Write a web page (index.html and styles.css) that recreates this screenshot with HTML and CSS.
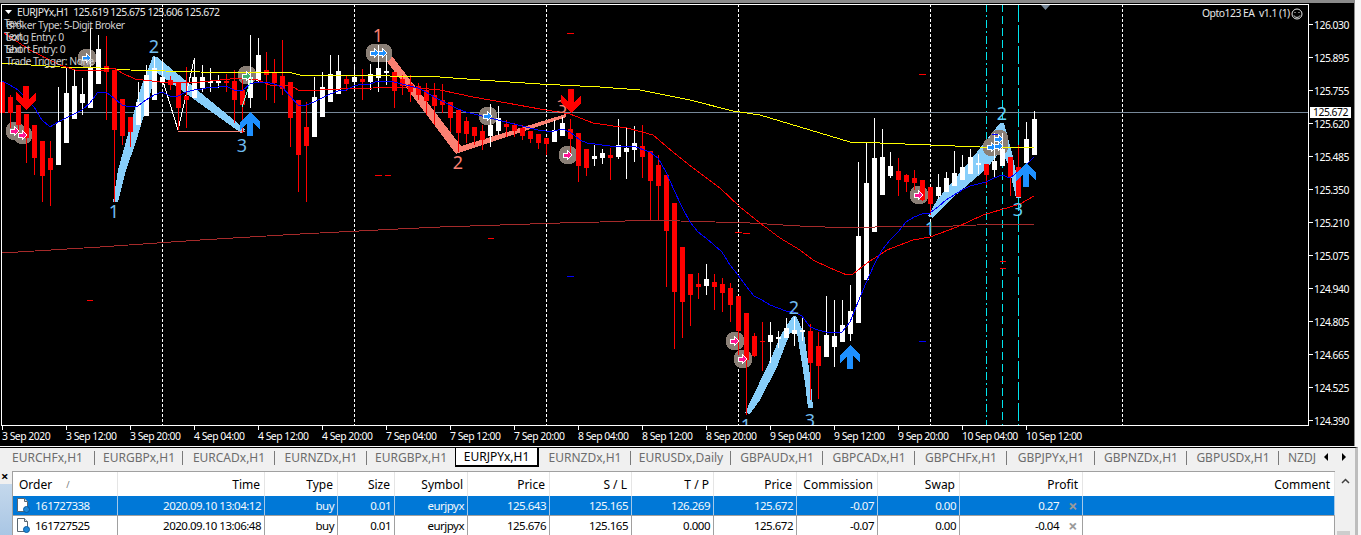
FILE: index.html
```html
<!DOCTYPE html>
<html lang="en">
<head>
<meta charset="utf-8">
<title>EURJPYx,H1</title>
<link rel="stylesheet" href="styles.css">
</head>
<body>
<main class="terminal">
  <section class="chart">
    <svg class="plot" viewBox="0 3 1309 423" width="1309" height="423">
      <defs>
        <polygon id="arrow-up" points="0,0 10,10 10,18 3,11 3,24 -3,24 -3,11 -10,18 -10,10"/>
        <polygon id="arrow-down" points="0,24 10,14 10,6 3,13 3,0 -3,0 -3,13 -10,6 -10,14"/>
        <polygon id="mini-arrow" points="-5,-2 -1,-2 -1,-5 4,0 -1,5 -1,2 -5,2"/>
      </defs>
      <g class="grid">
        <line x1="162.5" y1="4" x2="162.5" y2="425"/>
        <line x1="354.5" y1="4" x2="354.5" y2="425"/>
        <line x1="546.5" y1="4" x2="546.5" y2="425"/>
        <line x1="738.5" y1="4" x2="738.5" y2="425"/>
        <line x1="930.5" y1="4" x2="930.5" y2="425"/>
        <line x1="1122.5" y1="4" x2="1122.5" y2="425"/>
      </g>
      <line class="cyan dash-a" x1="986.5" y1="4" x2="986.5" y2="425"/>
      <line class="cyan dash-b" x1="1002.5" y1="4" x2="1002.5" y2="425"/>
      <line class="cyan dash-c" x1="1018.5" y1="4" x2="1018.5" y2="425"/>
      <line class="price-line" x1="2" y1="112.5" x2="1308" y2="112.5"/>

      <g class="zig-blue">
        <polygon points="113,202 118,170 125,145 140,90 153,56 157,57 245,129 241,133 156,72 150,95 135,145 126,170 118,202"/>
        <polygon points="745,413 751,400 767,367 782,333 793,316 796,316 804,333 811,383 813,408 808,408 805,383 797,333 790,333 777,367 760,400 750,414"/>
        <polygon points="928,216 937,200 973,157 1000,123 1004,123 1013,157 1021,198 1016,198 1009,167 1002,150 985,170 950,200 933,218"/>
      </g>
      <polygon class="zig-salmon" points="378,44 385,47 461,146 566,114 566,117 456,154 376,47"/>
      <polyline class="thin-white" points="162,78 178,130 194,60"/>
      <line class="thin-salmon" x1="178" y1="131.5" x2="245" y2="131.5"/>

      <g class="halo">
        <circle cx="87" cy="58" r="9.5"/><circle cx="15" cy="131" r="9.5"/><circle cx="23" cy="135" r="9.5"/>
        <circle cx="247" cy="75" r="9.5"/><circle cx="375" cy="53" r="9.5"/><circle cx="383" cy="53" r="9.5"/>
        <circle cx="488" cy="116" r="9.5"/><circle cx="568" cy="155" r="9.5"/><circle cx="735" cy="341" r="9.5"/>
        <circle cx="743" cy="359" r="9.5"/><circle cx="919" cy="195" r="9.5"/><circle cx="992" cy="147" r="9.5"/>
        <circle cx="999" cy="139" r="9.5"/><circle cx="999" cy="146" r="9.5"/>
      </g>

      <g id="candles"></g>

      <polyline class="ma ma-brown" points="2,253 100,247 200,240 300,234 398,229 440,227 500,225 560,223 600,222 650,220 680,221 750,223 800,226 850,228 900,226 930,227 1000,224 1034,224"/>
      <polyline class="ma ma-yellow" points="2,63 60,67 100,68 130,70 200,72 292,73 300,75 340,75 440,77 480,80 540,84 600,87 640,90 680,98 690,100 733,111 760,115 800,127 850,142 880,143 930,145 980,147 1034,147"/>
      <polyline class="ma ma-red" points="4,33 30,50 60,65 75,70 100,71 114,68 122,73 135,79 160,82 200,82 240,78 258,80 270,85 290,85 298,90 320,90 340,89 373,88 407,87 440,90 473,97 507,103 540,109 570,114 593,123 627,128 653,135 673,152 693,168 720,188 740,207 760,223 780,238 800,250 813,260 830,268 847,275 853,274 867,263 887,250 913,240 930,237 957,227 983,215 1010,207 1020,204 1034,196"/>
      <polyline class="ma ma-blue" points="2,81 10,85 18,90 26,98 34,107 42,120 50,127 58,122 66,118 74,114 82,110 90,103 98,92 106,92 114,98 122,105 130,107 138,106 146,100 154,95 162,92 170,96 178,96 186,92 194,90 202,89 210,87 218,87 226,86 234,90 242,91 250,84 258,82 266,82 274,84 282,87 290,96 298,105 306,105 314,102 322,98 330,94 338,91 346,90 354,86 362,84 370,84 378,81 386,81 394,82 402,84 410,86 418,88 426,92 434,97 442,101 450,105 458,109 466,112 474,114 482,116 490,118 498,120 506,122 514,124 522,126 530,128 538,130 546,131 554,131 562,129 570,132 580,140 587,143 610,146 633,146 650,152 658,158 666,172 674,190 682,207 690,222 698,232 706,238 714,245 722,252 730,265 738,275 746,286 754,296 762,300 770,305 778,308 786,311 794,312 802,316 810,327 818,330 826,332 834,333 842,332 850,322 858,302 866,283 874,265 882,250 890,240 898,232 906,222 914,217 922,214 930,213 938,207 946,200 954,195 962,190 970,186 978,184 986,182 994,178 1002,175 1010,178 1018,172 1026,165 1034,157"/>
      <polyline class="ma ma-aqua" points="242,107 246,95 252,77"/>

      <g class="stray-red">
        <rect x="87" y="300" width="6" height="1"/><rect x="375" y="175" width="7" height="1"/><rect x="385" y="175" width="6" height="1"/>
        <rect x="567" y="33" width="7" height="1"/><rect x="735" y="232" width="7" height="1"/><rect x="743" y="233" width="7" height="1"/>
        <rect x="1000" y="261" width="6" height="1"/><rect x="1000" y="268" width="6" height="1"/><rect x="919" y="74" width="7" height="1"/>
        <rect x="488" y="238" width="6" height="1"/>
      </g>
      <g class="stray-blue">
        <rect x="567" y="276" width="7" height="1"/><rect x="919" y="341" width="7" height="1"/><rect x="992" y="134" width="6" height="1"/>
      </g>

      <g class="mini mini-blue">
        <use href="#mini-arrow" x="87" y="58"/><use href="#mini-arrow" x="375" y="53"/><use href="#mini-arrow" x="383" y="53"/>
        <use href="#mini-arrow" x="488" y="116"/><use href="#mini-arrow" x="992" y="147"/><use href="#mini-arrow" x="999" y="139"/>
        <use href="#mini-arrow" x="999" y="146"/>
      </g>
      <g class="mini mini-pink">
        <use href="#mini-arrow" x="15" y="131"/><use href="#mini-arrow" x="23" y="135"/><use href="#mini-arrow" x="568" y="155"/>
        <use href="#mini-arrow" x="735" y="341"/><use href="#mini-arrow" x="743" y="359"/><use href="#mini-arrow" x="919" y="195"/>
      </g>
      <use class="mini mini-green" href="#mini-arrow" x="247" y="76"/>

      <g class="pivot pivot-blue">
        <text x="114" y="218">1</text><text x="154" y="53">2</text><text x="242" y="152">3</text>
        <text x="746" y="432">1</text><text x="794" y="314">2</text><text x="810" y="427">3</text>
      </g>
      <g class="pivot pivot-salmon">
        <text x="378" y="42">1</text><text x="458" y="169">2</text><text x="562" y="113">3</text>
      </g>
      <g class="pivot pivot-sky">
        <text x="930" y="235">1</text><text x="1002" y="120">2</text><text x="1018" y="216">3</text>
      </g>

      <g class="big-red">
        <use href="#arrow-down" x="26" y="86"/><use href="#arrow-down" x="571" y="89"/>
      </g>
      <g class="big-blue">
        <use href="#arrow-up" x="250" y="112"/><use href="#arrow-up" x="850" y="345"/><use href="#arrow-up" x="1026" y="163"/>
      </g>

      <polygon class="shift-mark" points="1041,5 1050,5 1045.5,10"/>
      <rect class="frame" x="1.5" y="4.5" width="1307" height="421"/>

      <polygon class="caret" points="5,10 12,10 8.5,14"/>
      <text class="chart-text bright" x="17" y="16">EURJPYx,H1  125.619 125.675 125.606 125.672</text>
      <text class="chart-text" x="6" y="29">Broker Type: 5-Digit Broker</text>
      <text class="chart-text" x="6" y="41">Long Entry: 0</text>
      <text class="chart-text" x="6" y="53">Short Entry: 0</text>
      <text class="chart-text" x="6" y="65">Trade Trigger: None</text>
      <text class="chart-text" x="4" y="27">Text</text>
      <text class="chart-text" x="4" y="40">Text</text>
      <text class="chart-text" x="4" y="53">Text</text>
      <text class="chart-text bright" x="1202" y="17">Opto123 EA  v1.1 (1)</text>
      <g class="smiley">
        <circle cx="1297" cy="14" r="5"/>
        <path d="M1294.5 12.5h1M1298.5 12.5h1M1294 15.5c1 2.5 5 2.5 6 0"/>
      </g>
    </svg>

    <div class="price-axis">
      <span class="price-tick">126.030</span>
      <span class="price-tick">125.895</span>
      <span class="price-tick">125.755</span>
      <span class="price-tick">125.620</span>
      <span class="price-tick">125.485</span>
      <span class="price-tick">125.350</span>
      <span class="price-tick">125.210</span>
      <span class="price-tick">125.075</span>
      <span class="price-tick">124.940</span>
      <span class="price-tick">124.805</span>
      <span class="price-tick">124.665</span>
      <span class="price-tick">124.525</span>
      <span class="price-tick">124.390</span>
      <span class="price-now">125.672</span>
    </div>

    <div class="time-axis">
      <span class="time-tick">3 Sep 2020</span>
      <span class="time-tick">3 Sep 12:00</span>
      <span class="time-tick">3 Sep 20:00</span>
      <span class="time-tick">4 Sep 04:00</span>
      <span class="time-tick">4 Sep 12:00</span>
      <span class="time-tick">4 Sep 20:00</span>
      <span class="time-tick">7 Sep 04:00</span>
      <span class="time-tick">7 Sep 12:00</span>
      <span class="time-tick">7 Sep 20:00</span>
      <span class="time-tick">8 Sep 04:00</span>
      <span class="time-tick">8 Sep 12:00</span>
      <span class="time-tick">8 Sep 20:00</span>
      <span class="time-tick">9 Sep 04:00</span>
      <span class="time-tick">9 Sep 12:00</span>
      <span class="time-tick">9 Sep 20:00</span>
      <span class="time-tick">10 Sep 04:00</span>
      <span class="time-tick">10 Sep 12:00</span>
    </div>
  </section>

  <nav class="tabs">
    <span class="tab">EURCHFx,H1</span>
    <span class="tab">EURGBPx,H1</span>
    <span class="tab">EURCADx,H1</span>
    <span class="tab">EURNZDx,H1</span>
    <span class="tab tab-before">EURGBPx,H1</span>
    <span class="tab tab-active">EURJPYx,H1</span>
    <span class="tab">EURNZDx,H1</span>
    <span class="tab">EURUSDx,Daily</span>
    <span class="tab">GBPAUDx,H1</span>
    <span class="tab">GBPCADx,H1</span>
    <span class="tab">GBPCHFx,H1</span>
    <span class="tab">GBPJPYx,H1</span>
    <span class="tab">GBPNZDx,H1</span>
    <span class="tab">GBPUSDx,H1</span>
    <span class="tab tab-clip">NZDJ</span>
    <span class="tab-arrows"><i class="tri-left"></i><i class="tri-right"></i></span>
  </nav>

  <section class="toolbox">
    <aside class="dock">
      <span class="dock-close">×</span>
      <span class="dock-pane"></span>
    </aside>
    <div class="orders">
      <div class="row head">
        <span class="cell left">Order<em class="sort">/</em></span>
        <span class="cell">Time</span><span class="cell">Type</span><span class="cell">Size</span>
        <span class="cell">Symbol</span><span class="cell">Price</span><span class="cell">S / L</span>
        <span class="cell">T / P</span><span class="cell">Price</span><span class="cell">Commission</span>
        <span class="cell">Swap</span><span class="cell">Profit</span><span class="cell">Comment</span>
      </div>
      <div class="row order selected">
        <span class="cell left">
          <svg class="doc" viewBox="0 0 14 15" width="14" height="15"><path class="doc-page" d="M1.5.5h7l3 3v10h-10z"/><path class="doc-fold" d="M8.5.5v3h3"/><circle class="doc-dot" cx="10.5" cy="11.5" r="3"/></svg>161727338
        </span>
        <span class="cell">2020.09.10 13:04:12</span><span class="cell">buy</span><span class="cell">0.01</span>
        <span class="cell">eurjpyx</span><span class="cell">125.643</span><span class="cell">125.165</span>
        <span class="cell">126.269</span><span class="cell">125.672</span><span class="cell">-0.07</span>
        <span class="cell">0.00</span><span class="cell profit">0.27<b class="close-x">×</b></span><span class="cell"></span>
      </div>
      <div class="row order">
        <span class="cell left">
          <svg class="doc" viewBox="0 0 14 15" width="14" height="15"><path class="doc-page" d="M1.5.5h7l3 3v10h-10z"/><path class="doc-fold" d="M8.5.5v3h3"/><circle class="doc-dot" cx="10.5" cy="11.5" r="3"/></svg>161727525
        </span>
        <span class="cell">2020.09.10 13:06:48</span><span class="cell">buy</span><span class="cell">0.01</span>
        <span class="cell">eurjpyx</span><span class="cell">125.676</span><span class="cell">125.165</span>
        <span class="cell">0.000</span><span class="cell">125.672</span><span class="cell">-0.07</span>
        <span class="cell">0.00</span><span class="cell profit">-0.04<b class="close-x">×</b></span><span class="cell"></span>
      </div>
    </div>
    <div class="scrollbar">
      <svg class="scroll-up" viewBox="0 0 9 6" width="9" height="6"><path d="M1 5l3.5-3.5L8 5"/></svg>
      <span class="scroll-thumb"></span>
    </div>
  </section>
</main>
<script src="script.js"></script>
</body>
</html>
```

FILE: styles.css
```css
* { box-sizing: border-box; }
html, body { margin: 0; height: 100%; overflow: hidden; }
body {
  background: #f7f7f7;
  font-family: "Noto Sans", "Open Sans", sans-serif;
  color: #000;
}
.terminal { display: flex; flex-direction: column; width: 1361px; height: 535px; overflow: hidden; }

/* chart */
.chart {
  display: grid;
  grid-template-columns: 1309px 45px;
  grid-template-rows: 423px 20px;
  width: 1355px;
  height: 446px;
  background: #000;
  color: #fff;
  border-top: 3px solid #8a8a8a;
  border-right: 1px solid #8a8a8a;
  font-size: 10.4px;
  line-height: 12px;
  letter-spacing: -0.5px;
}
.plot { display: block; background: #000; }
.grid line { stroke: #fff; stroke-width: 1; stroke-dasharray: 3 2; shape-rendering: crispEdges; }
.cyan { stroke: #00e5ee; stroke-width: 1; shape-rendering: crispEdges; }
.dash-a { stroke-dasharray: 8 3 2 3; }
.dash-b { stroke-dasharray: 8 4; }
.dash-c { stroke-dasharray: 18 3; }
.price-line { stroke: #778899; stroke-width: 1; shape-rendering: crispEdges; }
.zig-blue polygon { fill: #87cefa; shape-rendering: crispEdges; }
.zig-salmon { fill: #fa8072; shape-rendering: crispEdges; }
.thin-white { fill: none; stroke: #fff; stroke-width: 1; shape-rendering: crispEdges; }
.thin-salmon { stroke: #fa8072; stroke-width: 1; shape-rendering: crispEdges; }
.halo circle { fill: #8a7f76; shape-rendering: crispEdges; }
.ma { fill: none; stroke-width: 1; shape-rendering: crispEdges; }
.ma-brown { stroke: #a52a2a; }
.ma-yellow { stroke: #ffff00; }
.ma-red { stroke: #ff0000; }
.ma-blue { stroke: #0000ff; }
.ma-aqua { stroke: #7fffd4; }
.stray-red rect { fill: #ff0000; }
.stray-blue rect { fill: #0000ff; }
.wick-r, .body-r { fill: #ff0000; }
.wick-w, .body-w { fill: #ffffff; }
.mini { stroke: #fff; stroke-width: 1; shape-rendering: crispEdges; }
.mini-blue { fill: #1e90ff; }
.mini-pink { fill: #ff1493; }
.mini-green { fill: #3cb371; }
.pivot { font-family: "Noto Sans", sans-serif; font-size: 18px; letter-spacing: 0; text-anchor: middle; }
.pivot-blue text { fill: #70bcf0; }
.pivot-salmon text { fill: #fa8072; }
.pivot-sky text { fill: #62d0f8; }
.big-red { fill: #ff0000; shape-rendering: crispEdges; }
.big-blue { fill: #1e90ff; shape-rendering: crispEdges; }
.shift-mark { fill: #778899; }
.frame { fill: none; stroke: #fff; stroke-width: 1; shape-rendering: crispEdges; }
.caret { fill: #fff; }
.chart-text { font-size: 10.4px; fill: #cfcfcf; white-space: pre; }
.bright { fill: #e8e8e8; }
.smiley { fill: none; stroke: #e8e8e8; stroke-width: 1; }

.price-axis {
  position: relative;
  display: flex;
  flex-direction: column;
  padding-top: 5px;
}
.price-tick {
  display: flex;
  align-items: center;
  flex: 0 0 33px;
  gap: 1px;
}
.price-tick::before { content: ""; width: 4px; height: 1px; background: #fff; }
.price-now {
  position: absolute;
  left: 1px;
  top: 104px;
  width: 41px;
  height: 11px;
  padding-left: 3px;
  background: #fff;
  color: #000;
  line-height: 11px;
}
.time-axis {
  grid-column: 1 / -1;
  display: grid;
  grid-auto-flow: column;
  grid-auto-columns: 64px;
  padding-left: 2px;
  white-space: nowrap;
}
.time-tick::before { content: ""; display: block; width: 1px; height: 4px; background: #fff; }
.time-tick { line-height: 13px; }

/* tabs */
.tabs {
  display: grid;
  grid-template-columns: 95px 88px 92px 92px 88px 84px 92px 100px 92px 92px 92px 88px 92px 92px 39px 1fr;
  align-items: stretch;
  width: 1358px;
  height: 21px;
  margin-top: 1px;
  border-top: 1px solid #000;
  border-right: 3px solid #bdbdbd;
  font-size: 12px;
  color: #6d6d6d;
  background: #f0f0f0;
}
.tab {
  display: flex;
  align-items: center;
  justify-content: center;
  height: 18px;
  white-space: nowrap;
  position: relative;
}
.tab::after {
  content: "";
  position: absolute;
  right: 0;
  top: 3px;
  bottom: 1px;
  width: 1px;
  background: #7a7a7a;
}
.tab-before::after { display: none; }
.tab-active {
  margin-top: -1px;
  height: 20px;
  border: 1px solid #000;
  border-right-width: 2px;
  border-bottom-width: 2px;
  background: #fff;
  color: #000;
}
.tab-active::after, .tab-clip::after { display: none; }
.tab-clip { overflow: hidden; justify-content: flex-end; padding-right: 2px; }
.tab-arrows { display: flex; align-items: center; gap: 14px; height: 18px; padding-left: 6px; }
.tri-left { width: 0; height: 0; border: 4px solid transparent; border-left-width: 0; border-right: 4px solid #000; }
.tri-right { width: 0; height: 0; border: 4px solid transparent; border-right-width: 0; border-left: 4px solid #000; }

/* toolbox */
.toolbox {
  display: grid;
  grid-template-columns: 13px 1322px 20px;
  width: 1358px;
  height: 68px;
  padding-top: 4px;
  background: #f0f0f0;
  border-right: 3px solid #bdbdbd;
}
.dock { display: flex; flex-direction: column; border-top: 0; }
.dock-close { height: 13px; font-size: 13px; line-height: 10px; font-weight: 700; padding-left: 1px; }
.dock-pane { flex: 1; margin-right: 1px; background: linear-gradient(#c4d8ec, #a9c6e4); }
.orders { background: #fff; font-size: 12px; border-top: 1px solid #a0a0a0; border-left: 1px solid #a0a0a0; margin-left: -1px; }
.row {
  display: grid;
  grid-template-columns: 105px 147px 73px 57px 73px 82px 82px 82px 83px 81px 82px 123px 252px;
  white-space: nowrap;
}
.cell { display: flex; align-items: center; justify-content: flex-end; padding-right: 3px; border-right: 1px solid #a0a0a0; }
.left { justify-content: flex-start; }
.head { height: 24px; }
.head .cell { padding-right: 4px; border-right-color: #e5e5e5; }
.head .left { padding-left: 6px; }
.sort { margin-left: 14px; font-style: normal; font-size: 9px; color: #777; }
.order { height: 20px; border-bottom: 1px solid #a0a0a0; font-size: 11.5px; letter-spacing: -0.5px; }
.order .left { padding-left: 3px; }
.selected { background: #0078d7; color: #f4f8fc; }
.selected .cell { border-right-color: #a5c8e8; }
.doc { margin-right: 5px; flex: none; }
.doc-page { fill: #fff; stroke: #5a6670; stroke-width: 1; }
.doc-fold { fill: #e4e8ec; stroke: #5a6670; stroke-width: 1; }
.doc-dot { fill: #1e88d8; stroke: #0b5a9c; stroke-width: 1; }
.profit { padding-right: 0; }
.close-x { display: inline-block; width: 23px; padding-right: 5px; text-align: right; font-size: 16px; line-height: 12px; color: #9a9a9a; font-weight: 700; }
.scrollbar { display: flex; flex-direction: column; align-items: center; position: relative; background: #f0f0f0; }
.scroll-up { margin-top: 7px; fill: none; stroke: #404040; stroke-width: 1.5; }
.scroll-thumb { position: absolute; left: 2px; right: 5px; top: 60px; bottom: 0; background: #cdcdcd; }
```

FILE: script.js
```js
// Each candle: high, body top, body bottom, low, colour. Candles sit 8px apart, starting at x = 2.
var candles = [
  [82,82,113,113,'r'],[95,97,113,128,'r'],[105,105,125,134,'r'],[114,114,138,163,'r'],[125,125,158,175,'r'],
  [141,141,176,202,'r'],[141,158,170,206,'r'],[87,122,165,165,'w'],[68,93,143,143,'w'],[70,86,119,119,'w'],
  [78,94,103,115,'w'],[28,68,108,108,'w'],[35,49,84,84,'w'],[36,66,72,120,'r'],[70,70,130,202,'r'],
  [99,99,136,145,'r'],[117,117,132,147,'r'],[82,102,125,125,'w'],[65,75,116,116,'w'],[57,68,100,100,'w'],
  [60,77,83,87,'w'],[76,80,85,90,'r'],[82,82,108,130,'r'],[67,96,100,128,'r'],[58,77,98,98,'w'],
  [65,77,88,92,'w'],[68,81,83,92,'w'],[75,81,83,88,'w'],[74,81,83,92,'r'],[70,81,100,123,'r'],
  [80,90,105,133,'r'],[35,77,98,108,'w'],[38,55,81,83,'w'],[52,70,75,100,'r'],[59,72,83,103,'r'],
  [40,76,89,95,'r'],[82,82,118,147,'r'],[100,100,155,192,'r'],[102,127,146,202,'r'],[77,97,137,137,'w'],
  [72,87,117,117,'w'],[55,74,102,102,'w'],[55,71,94,94,'w'],[75,79,84,91,'r'],[64,77,82,88,'w'],
  [69,79,82,100,'r'],[64,74,82,90,'w'],[45,68,78,92,'w'],[55,71,73,85,'w'],[72,72,91,108,'r'],
  [75,79,86,95,'r'],[75,84,92,102,'r'],[83,86,95,100,'r'],[83,90,101,115,'r'],[83,95,106,125,'r'],
  [84,100,105,113,'r'],[102,102,118,132,'r'],[110,110,133,152,'r'],[117,121,134,143,'r'],[127,127,136,145,'r'],
  [125,131,140,150,'r'],[104,125,136,147,'w'],[106,118,131,135,'w'],[120,124,127,137,'r'],[123,125,131,137,'r'],
  [125,128,136,140,'r'],[131,131,139,143,'r'],[134,134,143,149,'r'],[138,138,144,155,'r'],[120,130,142,142,'w'],
  [117,123,136,136,'w'],[119,129,139,155,'r'],[133,133,166,182,'r'],[149,149,168,176,'r'],[145,156,159,166,'w'],
  [149,153,158,164,'w'],[148,155,158,180,'r'],[119,145,157,159,'w'],[128,148,152,179,'w'],[126,143,150,162,'w'],
  [125,146,157,178,'r'],[151,151,181,220,'r'],[155,165,186,220,'r'],[175,175,231,287,'r'],[203,203,292,349,'r'],
  [247,247,302,338,'r'],[274,274,295,326,'r'],[273,284,287,299,'r'],[264,279,286,295,'w'],[274,282,287,310,'r'],
  [278,284,293,312,'r'],[283,288,305,322,'r'],[296,296,331,355,'r'],[313,313,360,415,'r'],[333,336,356,357,'r'],
  [322,341,342,371,'r'],[322,335,342,363,'w'],[331,337,339,348,'w'],[318,328,338,338,'w'],[317,330,334,346,'w'],
  [317,330,332,341,'w'],[324,331,363,400,'r'],[332,346,366,399,'r'],[296,335,357,357,'w'],[300,336,347,367,'w'],
  [300,325,342,342,'w'],[285,311,334,341,'w'],[162,236,323,323,'w'],[143,183,280,280,'w'],[118,158,232,232,'w'],
  [129,157,195,195,'w'],[152,166,176,178,'w'],[158,171,180,196,'r'],[174,175,182,192,'r'],[170,178,183,190,'r'],
  [180,180,200,201,'r'],[187,187,204,215,'r'],[174,187,196,199,'w'],[172,178,192,192,'w'],[151,173,186,186,'w'],
  [155,167,180,180,'w'],[149,157,174,174,'w'],[154,163,165,174,'w'],[164,164,175,185,'r'],[133,161,170,177,'w'],
  [133,149,166,166,'w'],[157,157,177,196,'r'],[145,167,197,197,'r'],[122,139,163,163,'w'],[111,119,155,155,'w']
];

var NS = 'http://www.w3.org/2000/svg';
var group = document.getElementById('candles');

function addRect(x, y, w, h, cls) {
  var r = document.createElementNS(NS, 'rect');
  r.setAttribute('x', x);
  r.setAttribute('y', y);
  r.setAttribute('width', w);
  r.setAttribute('height', h);
  r.setAttribute('class', cls);
  group.appendChild(r);
}

candles.forEach(function (c, i) {
  var x = 2 + i * 8;
  addRect(x, c[0], 1, c[3] - c[0], 'wick-' + c[4]);
  addRect(x - 2, c[1], 5, Math.max(c[2] - c[1], 1), 'body-' + c[4]);
});
```
